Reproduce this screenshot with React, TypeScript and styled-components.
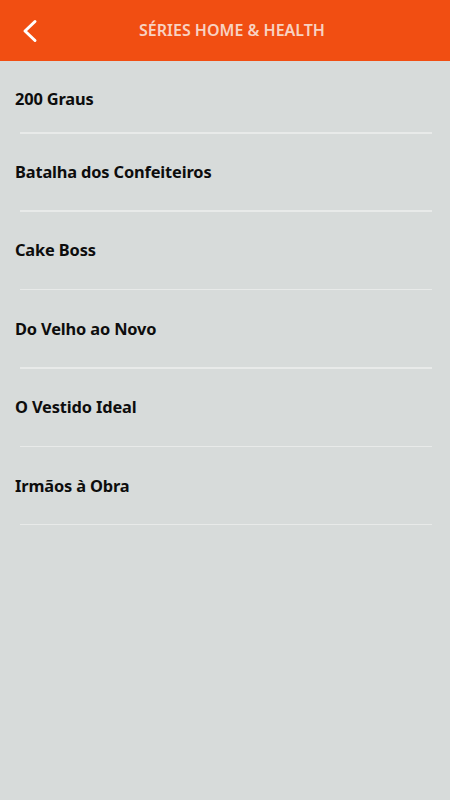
import styled, { createGlobalStyle } from 'styled-components'

const GlobalStyle = createGlobalStyle`
  html, body {
    margin: 0;
    padding: 0;
    background: #d7dbda;
  }
  body {
    font-family: 'Noto Sans', 'Open Sans', sans-serif;
  }
`

const Screen = styled.div`
  width: 450px;
  min-height: 800px;
  background: #d7dbda;
  display: flex;
  flex-direction: column;
`

const Header = styled.header`
  height: 61px;
  background: #f14e12;
  display: grid;
  grid-template-columns: 61px 1fr 61px;
  align-items: center;
`

const BackButton = styled.button`
  border: none;
  background: none;
  padding: 0 0 0 21px;
  height: 61px;
  display: flex;
  align-items: center;
  cursor: pointer;
`

const Title = styled.h1`
  margin: 0;
  text-align: center;
  color: #f8d2c2;
  font-size: 16px;
  font-weight: 600;
  padding-left: 14px;
  padding-bottom: 1px;
`

const List = styled.ul`
  list-style: none;
  margin: 0;
  padding: 0;
`

const Row = styled.li<{ $first?: boolean }>`
  height: ${(p) => (p.$first ? 72.5 : 78.4)}px;
  display: flex;
  flex-direction: column;
  justify-content: space-between;
`

const Label = styled.div<{ $first?: boolean }>`
  flex: 1;
  display: flex;
  align-items: center;
  padding: ${(p) => (p.$first ? '3px 15px 0' : '0 15px 1px')};
  font-size: 16.4px;
  font-weight: 700;
  color: #0d0d0d;
  letter-spacing: -0.15px;
`

const Divider = styled.div`
  margin: 0 18px 0 20px;
  height: 1.5px;
  background: #e8eae9;
`

const shows = [
  '200 Graus',
  'Batalha dos Confeiteiros',
  'Cake Boss',
  'Do Velho ao Novo',
  'O Vestido Ideal',
  'Irmãos à Obra',
]

const App = () => {
  return (
    <Screen>
      <GlobalStyle />
      <Header>
        <BackButton aria-label="Voltar">
          <svg width="17" height="24" viewBox="0 0 17 24">
            <path d="M14 2.5 L4 12 L14 21.5" fill="none" stroke="#fff" strokeWidth="3" strokeLinecap="round" strokeLinejoin="round" />
          </svg>
        </BackButton>
        <Title>SÉRIES HOME &amp; HEALTH</Title>
        <div />
      </Header>
      <List>
        {shows.map((name, i) => (
          <Row key={name} $first={i === 0}>
            <Label $first={i === 0}>{name}</Label>
            <Divider />
          </Row>
        ))}
      </List>
    </Screen>
  )
}

export default App
